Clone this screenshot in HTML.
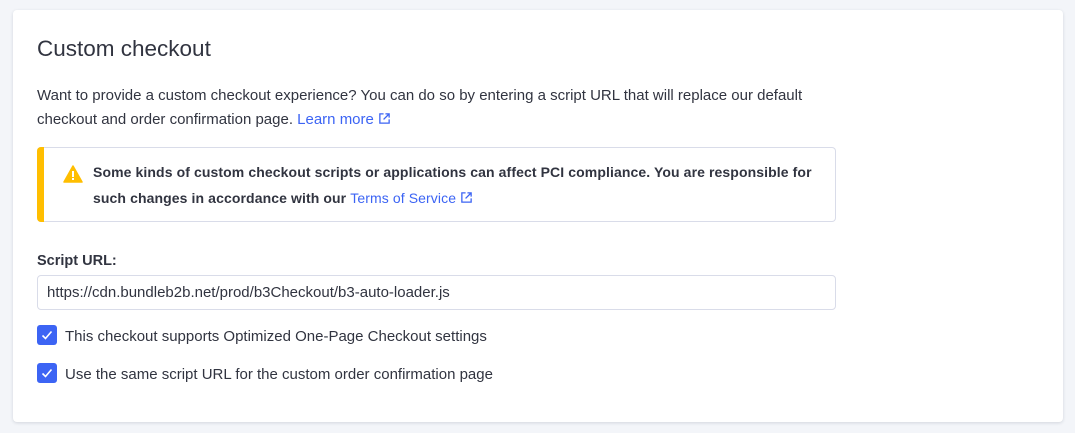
<!DOCTYPE html>
<html><head><style>
body{margin:0;width:1075px;height:433px;background:#f3f5f9;font-family:"Liberation Sans",sans-serif;color:#313440;overflow:hidden}
.card{position:absolute;left:13px;top:10px;width:1050px;height:412px;background:#fff;border-radius:4px;box-shadow:0 1px 3px rgba(30,40,60,.15)}
.a{position:absolute;white-space:nowrap}
h1{position:absolute;left:24px;top:26px;margin:0;font-size:22.5px;font-weight:normal;color:#313440}
.p{font-size:15px;left:24px}
a{color:#3c64f4;text-decoration:none}
.alert{position:absolute;left:24px;top:137px;width:798px;height:73px;border:1px solid #d9dce9;border-left:none;border-radius:4px;background:#fff}
.alert:before{content:"";position:absolute;left:0;top:-1px;bottom:-1px;width:7px;background:#ffbe00;border-radius:4px 0 0 4px}
.b{font-weight:bold;font-size:14px;left:56px;letter-spacing:0.1px}
.inp{position:absolute;left:24px;top:265px;width:799px;height:35px;border:1px solid #d9dce9;border-radius:4px;font-size:15px;line-height:34px;box-sizing:border-box;padding-left:9px}
.cb{position:absolute;left:24px;width:20px;height:20px;background:#3c64f4;border-radius:3px}
</style></head><body>
<div class="card">
<h1>Custom checkout</h1>
<div class="a p" style="top:77px">Want to provide a custom checkout experience? You can do so by entering a script URL that will replace our default</div>
<div class="a p" style="top:101px">checkout and order confirmation page. <a>Learn more <svg width="13" height="13" viewBox="0 0 14 14" style="vertical-align:-1px"><path d="M6 2H2v10h10V8M8 2h4v4M12 2L6 8" fill="none" stroke="#3c64f4" stroke-width="1.4"/></svg></a></div>
<div class="alert">
<svg style="position:absolute;left:26px;top:17px" width="20" height="18" viewBox="0 0 20 18"><path d="M10 1L19 17H1Z" fill="#ffbe00" stroke="#ffbe00" stroke-linejoin="round" stroke-width="1.5"/><rect x="9" y="6" width="2" height="6" fill="#fff"/><rect x="9" y="13" width="2" height="2" fill="#fff"/></svg>
<div class="a b" style="top:16px">Some kinds of custom checkout scripts or applications can affect PCI compliance. You are responsible for</div>
<div class="a b" style="top:42px">such changes in accordance with our <a style="font-weight:normal">Terms of Service <svg width="13" height="13" viewBox="0 0 14 14" style="vertical-align:-1px"><path d="M6 2H2v10h10V8M8 2h4v4M12 2L6 8" fill="none" stroke="#3c64f4" stroke-width="1.4"/></svg></a></div>
</div>
<div class="a p" style="top:243px;font-weight:bold;font-size:14.5px">Script URL:</div>
<div class="inp">https://cdn.bundleb2b.net/prod/b3Checkout/b3-auto-loader.js</div>
<div class="cb" style="top:315px"><svg width="20" height="20" viewBox="0 0 20 20"><path d="M5.5 10.5l3 3 6-7" fill="none" stroke="#fff" stroke-width="1.6"/></svg></div>
<div class="a p" style="top:318px;left:52px">This checkout supports Optimized One-Page Checkout settings</div>
<div class="cb" style="top:353px"><svg width="20" height="20" viewBox="0 0 20 20"><path d="M5.5 10.5l3 3 6-7" fill="none" stroke="#fff" stroke-width="1.6"/></svg></div>
<div class="a p" style="top:356px;left:52px">Use the same script URL for the custom order confirmation page</div>
</div>
</body></html>
